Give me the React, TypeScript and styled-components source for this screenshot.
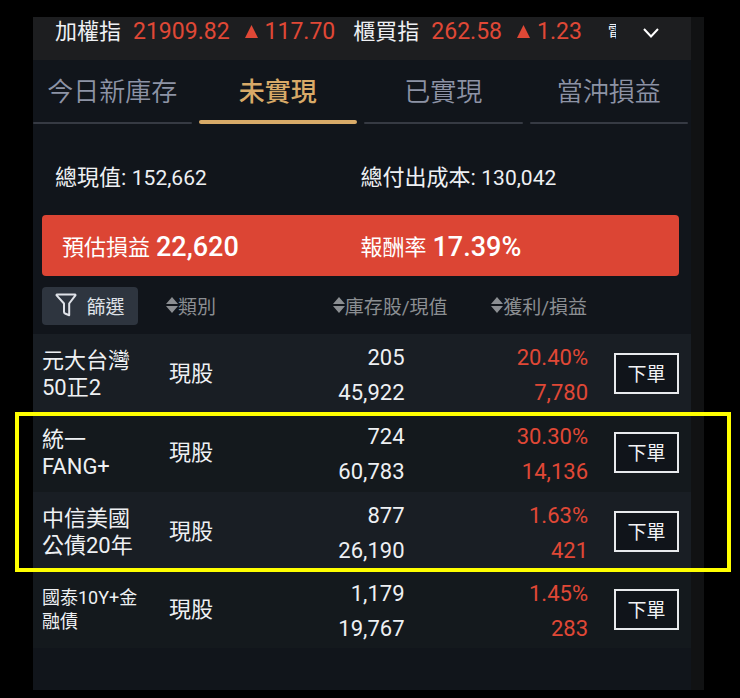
import React from "react";
import styled, { createGlobalStyle } from "styled-components";

const GlobalStyle = createGlobalStyle`
  * { box-sizing: border-box; }
  body {
    margin: 0;
    background: #000;
    color: #eef0f3;
    font-family: Roboto, "Noto Sans CJK TC", sans-serif;
  }
  button { font-family: inherit; cursor: pointer; }
`;

const RED = "#e04836";

const Page = styled.main`
  min-height: 100vh;
  padding: 17px 36px 8px 33px;
  display: flex;
`;

const Panel = styled.section`
  flex: 1;
  min-width: 0;
  padding-right: 13px;
  background: #111213;
  display: flex;
`;

const Content = styled.div`
  flex: 1;
  min-width: 0;
  background: #11151b;
`;

const Ticker = styled.header`
  height: 43px;
  padding: 0 32px 14px 22px;
  display: flex;
  align-items: center;
  background: #1d1e20;
  font-size: 22px;
  line-height: 28px;
  white-space: nowrap;
`;

const Index = styled.div`
  display: flex;
  align-items: center;
  margin-right: 18px;
`;

const IndexValue = styled.span`
  margin-left: 12px;
  color: ${RED};
  font-size: 23px;
`;

const IndexChange = styled.span`
  margin-left: 15px;
  display: flex;
  align-items: center;
  gap: 7px;
  color: ${RED};
  font-size: 23px;
`;

const ClippedName = styled.span`
  width: 8px;
  margin-left: 8px;
  overflow: hidden;
  font-size: 17px;
`;

const ExpandButton = styled.button`
  margin-left: auto;
  padding: 2px 0 0;
  border: 0;
  background: none;
  color: #fff;
  display: flex;
`;

const Tabs = styled.nav`
  height: 64px;
  padding-right: 3px;
  display: flex;
  gap: 7px;
`;

const Tab = styled.button<{ $active?: boolean }>`
  flex: 1;
  padding: 0;
  border: 0;
  background: none;
  display: flex;
  flex-direction: column;
  color: ${(p) => (p.$active ? "#d8aa68" : "#8d93a5")};
  font-size: 26px;
  font-weight: ${(p) => (p.$active ? 500 : 350)};
  line-height: 64px;
  white-space: nowrap;
  align-items: center;
  height: 64px;

  &::after {
    content: "";
    width: 100%;
    height: ${(p) => (p.$active ? 4 : 2)}px;
    margin-top: ${(p) => (p.$active ? -4 : -2)}px;
    border-radius: 2px;
    background: ${(p) => (p.$active ? "#d8aa68" : "#363a43")};
  }
`;

const Totals = styled.div`
  margin: 0 12px 0 9px;
  height: 91px;
  padding-top: 10px;
  display: grid;
  grid-template-columns: 1fr 1fr;
  align-items: center;
  font-size: 22px;
  white-space: nowrap;
`;

const Total = styled.div<{ $indent?: number }>`
  padding-left: ${(p) => p.$indent ?? 0}px;
`;

const TotalValue = styled.span`
  font-size: 21px;
`;

const Banner = styled.div`
  margin: 0 12px 0 9px;
  height: 61px;
  border-radius: 4px;
  background: #dc4534;
  color: #fff;
  display: grid;
  grid-template-columns: 1fr 1fr;
  align-items: center;
  font-size: 22px;
  white-space: nowrap;
`;

const BannerItem = styled.div<{ $indent?: number }>`
  padding-left: ${(p) => p.$indent ?? 0}px;
  display: flex;
  align-items: center;
  gap: 6px;
`;

const BannerLabel = styled.span`
  padding-bottom: 2px;
`;

const BannerValue = styled.strong`
  padding-top: 2px;
  font-size: 27px;
  font-weight: 500;
`;

const Table = styled.table`
  width: 100%;
  border-collapse: collapse;
  table-layout: fixed;
`;

const Col = styled.col<{ $width?: number }>`
  width: ${(p) => (p.$width ? `${p.$width}px` : "auto")};
`;

const HeadCell = styled.th<{ $align?: "left" | "right"; $right?: number; $left?: number }>`
  height: 58px;
  padding: 2px ${(p) => p.$right ?? 0}px 0 ${(p) => p.$left ?? 0}px;
  text-align: ${(p) => p.$align ?? "left"};
  font-weight: 400;
  white-space: nowrap;
`;

const FilterButton = styled.button`
  width: 96px;
  height: 38px;
  padding: 0 0 2px;
  border: 0;
  border-radius: 4px;
  background: #2e353f;
  color: #dfe2e8;
  display: flex;
  align-items: center;
  justify-content: center;
  gap: 9px;
  font-size: 19px;
`;

const SortButton = styled.button`
  padding: 0 0 2px;
  border: 0;
  background: none;
  color: #8b8e92;
  display: inline-flex;
  align-items: center;
  font-size: 19px;
`;

const Group = styled.tbody<{ $marked?: boolean }>`
  ${(p) =>
    p.$marked &&
    `
    position: relative;
    &::after {
      content: "";
      position: absolute;
      inset: -1px -40px -1px -18px;
      border: 4px solid #ffff00;
      pointer-events: none;
    }
  `}
`;

const Row = styled.tr<{ $light: boolean; $small: boolean }>`
  height: ${(p) => (p.$small ? 77 : 79)}px;
  background: ${(p) => (p.$light ? "#191e24" : "#14191d")};
`;

const NameCell = styled.th<{ $small: boolean }>`
  padding: 0 0 0 9px;
  text-align: left;
  font-weight: 400;
  font-size: ${(p) => (p.$small ? 18 : 22)}px;
  line-height: ${(p) => (p.$small ? 24 : 27)}px;
  white-space: nowrap;
`;

const TypeCell = styled.td`
  padding: 0 0 6px 3px;
  font-size: 22px;
`;

const NumberCell = styled.td<{ $right?: number; $gain?: boolean }>`
  padding: 2px ${(p) => p.$right ?? 0}px 0 0;
  text-align: right;
  color: ${(p) => (p.$gain ? RED : "inherit")};
  font-size: 22px;
  line-height: 35px;
`;

const ActionCell = styled.td`
  padding: 0 12px 0 0;
  text-align: right;
`;

const OrderButton = styled.button`
  width: 65px;
  height: 41px;
  padding: 0 0 3px;
  border: 2px solid #e8eaed;
  background: #10141a;
  color: #f2f3f5;
  font-size: 19px;
  vertical-align: middle;
`;

const UpTriangle = () => (
  <svg width="13" height="13" viewBox="0 0 13 13" aria-hidden="true">
    <path d="M6.5 0L13 13H0z" fill="currentColor" />
  </svg>
);

const SortIcon = () => (
  <svg width="12" height="16" viewBox="0 0 12 16" aria-hidden="true">
    <path d="M6 0l6 7H0zM6 16L0 9h12z" fill="currentColor" />
  </svg>
);

const FunnelIcon = () => (
  <svg width="22" height="24" viewBox="0 0 22 24" fill="none" aria-hidden="true">
    <path
      d="M2 1.500h18c.5 0 .7.5.4.9L14.200 10.500v11.700l-4.200-1.700a1.500 1.500 0 0 1-1-1.400V10.500L1.600 2.400c-.3-.4-.1-.9.4-.9z"
      stroke="currentColor"
      strokeWidth="2"
      strokeLinejoin="round"
    />
  </svg>
);

const ChevronIcon = () => (
  <svg width="16" height="10" viewBox="0 0 16 10" fill="none" aria-hidden="true">
    <path d="M1 1l7 7.500L15 1" stroke="currentColor" strokeWidth="2" />
  </svg>
);

type Holding = {
  name: [string, string];
  shares: string;
  value: string;
  rate: string;
  profit: string;
  small?: boolean;
};

const holdings: Holding[] = [
  { name: ["元大台灣", "50正2"], shares: "205", value: "45,922", rate: "20.40%", profit: "7,780" },
  { name: ["統一", "FANG+"], shares: "724", value: "60,783", rate: "30.30%", profit: "14,136" },
  { name: ["中信美國", "公債20年"], shares: "877", value: "26,190", rate: "1.63%", profit: "421" },
  { name: ["國泰10Y+金", "融債"], shares: "1,179", value: "19,767", rate: "1.45%", profit: "283", small: true },
];

const groups = [
  { marked: false, rows: holdings.slice(0, 1), start: 0 },
  { marked: true, rows: holdings.slice(1, 3), start: 1 },
  { marked: false, rows: holdings.slice(3), start: 3 },
];

const indices = [
  { name: "加權指", value: "21909.82", change: "117.70" },
  { name: "櫃買指", value: "262.58", change: "1.23" },
];

const tabs = ["今日新庫存", "未實現", "已實現", "當沖損益"];

const Sort = ({ label }: { label: string }) => (
  <SortButton type="button">
    <SortIcon />
    {label}
  </SortButton>
);

export default function App() {
  return (
    <>
      <GlobalStyle />
      <Page>
        <Panel>
          <Content>
            <Ticker>
              {indices.map((i) => (
                <Index key={i.name}>
                  {i.name}
                  <IndexValue>{i.value}</IndexValue>
                  <IndexChange>
                    <UpTriangle />
                    {i.change}
                  </IndexChange>
                </Index>
              ))}
              <ClippedName>電</ClippedName>
              <ExpandButton type="button" aria-label="展開">
                <ChevronIcon />
              </ExpandButton>
            </Ticker>

            <Tabs>
              {tabs.map((t) => (
                <Tab key={t} type="button" $active={t === "未實現"}>
                  {t}
                </Tab>
              ))}
            </Tabs>

            <Totals>
              <Total $indent={13}>
                總現值: <TotalValue>152,662</TotalValue>
              </Total>
              <Total>
                總付出成本: <TotalValue>130,042</TotalValue>
              </Total>
            </Totals>

            <Banner>
              <BannerItem $indent={20}>
                <BannerLabel>預估損益</BannerLabel>
                <BannerValue>22,620</BannerValue>
              </BannerItem>
              <BannerItem>
                <BannerLabel>報酬率</BannerLabel>
                <BannerValue>17.39%</BannerValue>
              </BannerItem>
            </Banner>

            <Table>
              <colgroup>
                <Col $width={133} />
                <Col />
                <Col $width={161} />
                <Col />
                <Col $width={103} />
              </colgroup>
              <thead>
                <tr>
                  <HeadCell $left={9}>
                    <FilterButton type="button">
                      <FunnelIcon />
                      篩選
                    </FilterButton>
                  </HeadCell>
                  <HeadCell>
                    <Sort label="類別" />
                  </HeadCell>
                  <HeadCell $align="right" $right={10}>
                    <Sort label="庫存股/現值" />
                  </HeadCell>
                  <HeadCell $align="right" $right={1}>
                    <Sort label="獲利/損益" />
                  </HeadCell>
                  <HeadCell aria-label="操作" />
                </tr>
              </thead>
              {groups.map((g) => (
                <Group key={g.start} $marked={g.marked}>
                  {g.rows.map((h, i) => (
                    <Row key={h.name[0]} $light={(g.start + i) % 2 === 0} $small={!!h.small}>
                      <NameCell scope="row" $small={!!h.small}>
                        {h.name[0]}
                        <br />
                        {h.name[1]}
                      </NameCell>
                      <TypeCell>現股</TypeCell>
                      <NumberCell $right={53}>
                        {h.shares}
                        <br />
                        {h.value}
                      </NumberCell>
                      <NumberCell $gain>
                        {h.rate}
                        <br />
                        {h.profit}
                      </NumberCell>
                      <ActionCell>
                        <OrderButton type="button">下單</OrderButton>
                      </ActionCell>
                    </Row>
                  ))}
                </Group>
              ))}
            </Table>
          </Content>
        </Panel>
      </Page>
    </>
  );
}
